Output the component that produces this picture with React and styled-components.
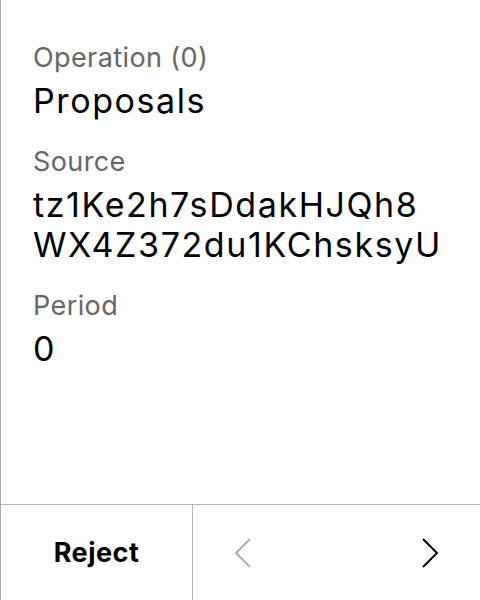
import React from "react";
import styled, { createGlobalStyle } from "styled-components";

const Global = createGlobalStyle`
  html, body { margin: 0; padding: 0; background: #fff; }
  body { font-family: Inter, "Noto Sans", sans-serif; }
`;

const Screen = styled.div`
  width: 480px;
  height: 600px;
  box-sizing: border-box;
  border-left: 1px solid #aaaaaa;
  display: flex;
  flex-direction: column;
  color: #000;
`;

const Content = styled.div`
  flex: 1;
  padding: 40px 32px 0 32px;
  display: flex;
  flex-direction: column;
  gap: 23px;
`;

const Field = styled.div`
  display: flex;
  flex-direction: column;
  gap: 5px;
`;

const Label = styled.div`
  font-size: 27px;
  line-height: 36px;
  letter-spacing: 0.4px;
  color: #666666;
`;

const Value = styled.div`
  font-size: 34px;
  line-height: 40px;
  letter-spacing: 1.6px;
  color: #000;
`;

const Bar = styled.div`
  height: 95px;
  border-top: 1px solid #b3b3b3;
  display: flex;
`;

const RejectButton = styled.div`
  width: 191px;
  border-right: 1px solid #b3b3b3;
  display: flex;
  align-items: center;
  justify-content: center;
  font-size: 27px;
  letter-spacing: 0.5px;
  font-weight: 700;
`;

const Nav = styled.div`
  flex: 1;
  display: flex;
  align-items: center;
  justify-content: space-between;
  padding: 0 41px 0 41px;
`;

const Chevron = ({ dir, color }) => (
  <svg width="18" height="30" viewBox="0 0 18 30">
    {dir === "left" ? (
      <polyline points="16,1 2,15 16,29" fill="none" stroke={color} strokeWidth="2" />
    ) : (
      <polyline points="2,1 16,15 2,29" fill="none" stroke={color} strokeWidth="2" />
    )}
  </svg>
);

export default function App() {
  return (
    <>
      <Global />
      <Screen>
        <Content>
          <Field>
            <Label>Operation (0)</Label>
            <Value>Proposals</Value>
          </Field>
          <Field>
            <Label>Source</Label>
            <Value>tz1Ke2h7sDdakHJQh8<br />WX4Z372du1KChsksyU</Value>
          </Field>
          <Field>
            <Label>Period</Label>
            <Value>0</Value>
          </Field>
        </Content>
        <Bar>
          <RejectButton>Reject</RejectButton>
          <Nav>
            <Chevron dir="left" color="#b0b0b0" />
            <Chevron dir="right" color="#000" />
          </Nav>
        </Bar>
      </Screen>
    </>
  );
}
